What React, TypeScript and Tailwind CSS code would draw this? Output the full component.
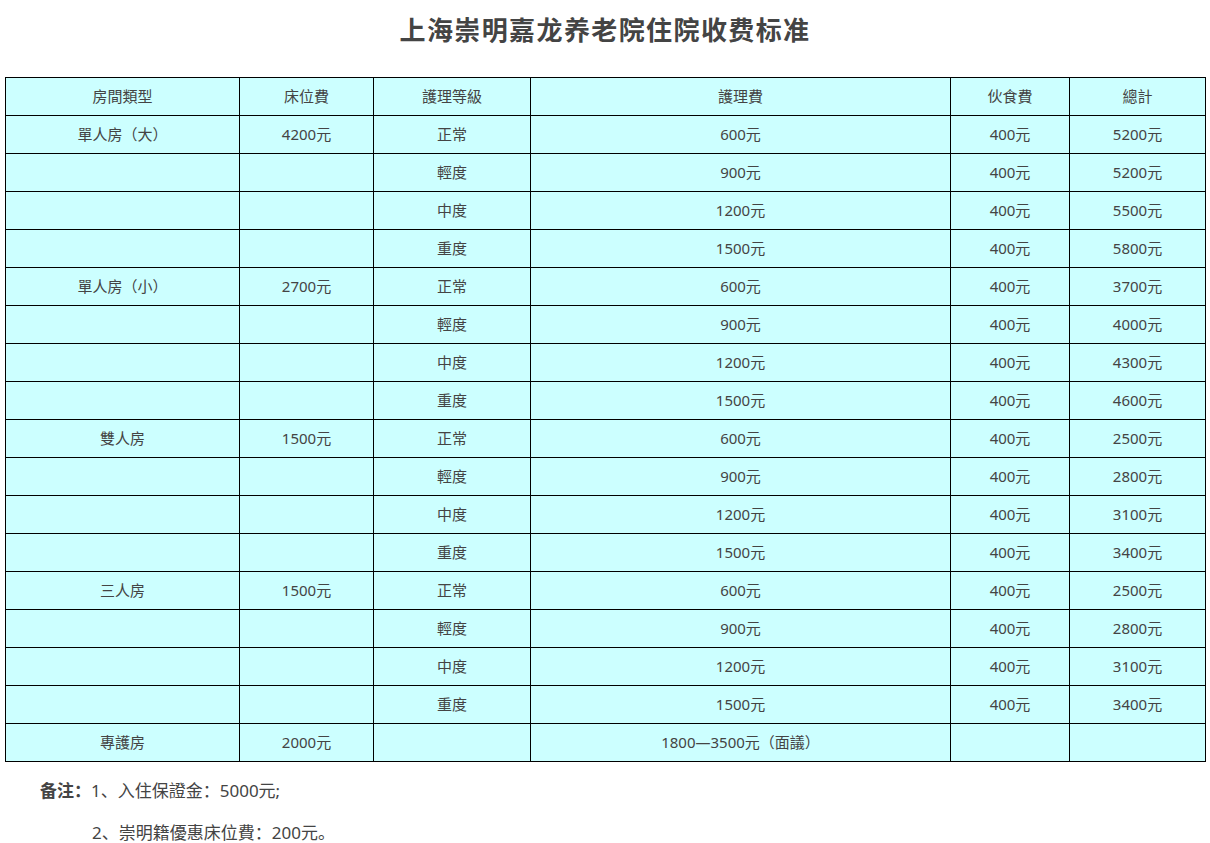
const rows: string[][] = [
  ['單人房（大）', '4200元', '正常', '600元', '400元', '5200元'],
  ['', '', '輕度', '900元', '400元', '5200元'],
  ['', '', '中度', '1200元', '400元', '5500元'],
  ['', '', '重度', '1500元', '400元', '5800元'],
  ['單人房（小）', '2700元', '正常', '600元', '400元', '3700元'],
  ['', '', '輕度', '900元', '400元', '4000元'],
  ['', '', '中度', '1200元', '400元', '4300元'],
  ['', '', '重度', '1500元', '400元', '4600元'],
  ['雙人房', '1500元', '正常', '600元', '400元', '2500元'],
  ['', '', '輕度', '900元', '400元', '2800元'],
  ['', '', '中度', '1200元', '400元', '3100元'],
  ['', '', '重度', '1500元', '400元', '3400元'],
  ['三人房', '1500元', '正常', '600元', '400元', '2500元'],
  ['', '', '輕度', '900元', '400元', '2800元'],
  ['', '', '中度', '1200元', '400元', '3100元'],
  ['', '', '重度', '1500元', '400元', '3400元'],
  ['專護房', '2000元', '', '1800—3500元（面議）', '', ''],
]

const headers = ['房間類型', '床位費', '護理等級', '護理費', '伙食費', '總計']
const widths = ['w-[234px]', 'w-[134px]', 'w-[157px]', 'w-[420px]', 'w-[119px]', 'w-[136px]']

export default function App() {
  return (
    <div
      className="min-h-screen bg-white text-[#444]"
      style={{ fontFamily: '"Noto Sans", "Noto Sans CJK SC", sans-serif' }}
    >
      <h1 className="pt-[13px] text-center text-[26px] font-bold leading-[34px] text-[#444] tracking-[1.4px]">
        上海崇明嘉龙养老院住院收费标准
      </h1>

      <div className="px-[5px] pt-[30px]">
        <table className="w-[1200px] border-collapse table-fixed bg-[#ccffff] text-[15px] text-[#444]">
          <thead>
            <tr>
              {headers.map((h, i) => (
                <th key={h} className={`${widths[i]} h-[38px] border border-black p-0 text-center font-normal`}>
                  {h}
                </th>
              ))}
            </tr>
          </thead>
          <tbody>
            {rows.map((r, ri) => (
              <tr key={ri}>
                {r.map((c, ci) => (
                  <td key={ci} className="h-[38px] border border-black p-0 text-center">
                    {c}
                  </td>
                ))}
              </tr>
            ))}
          </tbody>
        </table>
      </div>

      <div className="text-[17px] text-[#444]">
        <p className="pl-[40px] pt-[17px] leading-[24px]">
          <span className="font-bold">备注：</span>1、入住保證金：5000元;
        </p>
        <p className="pl-[92px] pt-[18px] leading-[24px]">2、崇明籍優惠床位費：200元。</p>
      </div>
    </div>
  )
}
